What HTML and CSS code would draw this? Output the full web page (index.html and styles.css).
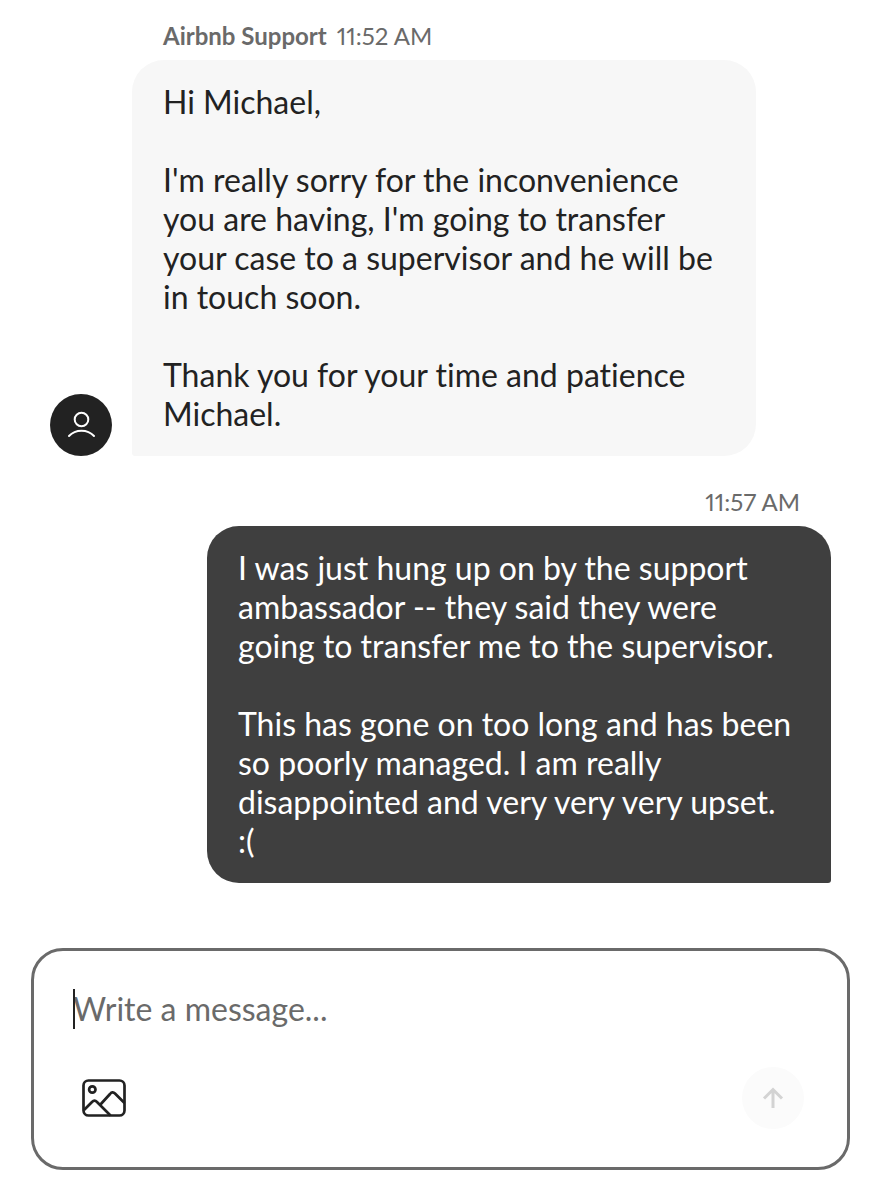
FILE: index.html
```html
<!DOCTYPE html>
<html lang="en">
<head>
  <meta charset="UTF-8" />
  <meta name="viewport" content="width=device-width, initial-scale=1.0" />
  <title>Airbnb Support</title>
  <link rel="stylesheet" href="styles.css">
</head>
<body>
  <main class="chat">
    <article class="message incoming">
      <p class="meta"><strong>Airbnb Support</strong><time>11:52 AM</time></p>
      <div class="message-row">
        <div class="avatar">
          <svg viewBox="0 0 62 62" fill="none" stroke="#fff" stroke-width="2" stroke-linecap="round" aria-hidden="true">
            <circle cx="31.5" cy="25.5" r="6.8" />
            <path d="M19 42C25.5 35 37.5 35 44 42" />
          </svg>
        </div>
        <div class="bubble">
          <p>Hi Michael,</p>
          <p>I'm really sorry for the inconvenience you are having, I'm going to transfer your case to a supervisor and he will be in touch soon.</p>
          <p>Thank you for your time and patience Michael.</p>
        </div>
      </div>
    </article>

    <article class="message outgoing">
      <p class="meta"><time>11:57 AM</time></p>
      <div class="bubble">
        <p>I was just hung up on by the support ambassador -- they said they were going to transfer me to the supervisor.</p>
        <p>This has gone on too long and has been so poorly managed. I am really disappointed and very very very upset. <span class="emoticon">:(</span></p>
      </div>
    </article>
  </main>

  <form class="composer">
    <div class="field">
      <textarea id="message" rows="1" placeholder="Write a message..." aria-label="Write a message"></textarea>
    </div>
    <div class="actions">
      <button type="button" class="image-btn" aria-label="Add image">
        <svg viewBox="0 0 44 38" fill="none" stroke="#222" stroke-width="2.7" aria-hidden="true">
          <rect x="1.5" y="1.5" width="41" height="35" rx="5" />
          <circle cx="10.3" cy="10.5" r="3.2" />
          <path d="M2 31L10 23Q12.5 20.5 15 23L28.5 36.5M18 26L28 15Q30.5 12 33 14.5L42.5 24" />
        </svg>
      </button>
      <button type="submit" class="send-btn" aria-label="Send" disabled>
        <svg viewBox="0 0 62 62" fill="none" stroke="#d3d3d3" stroke-width="3" aria-hidden="true">
          <path d="M31 41V22M22 31.5L31 22.5L40 31.5" />
        </svg>
      </button>
    </div>
  </form>
</body>
</html>
```
FILE: styles.css
```css
* {
  box-sizing: border-box;
  margin: 0;
  padding: 0;
}
body {
  font-family: Lato, "Liberation Sans", sans-serif;
  font-size: 32px;
  line-height: 39px;
  font-variant-ligatures: none;
  font-variant-numeric: proportional-nums;
  color: #222;
  background: #fff;
}
.chat {
  display: flex;
  flex-direction: column;
  gap: 31px;
  padding: 21px 58px 65px 50px;
}
.message {
  display: flex;
  flex-direction: column;
}
.meta {
  display: flex;
  gap: 10px;
  font-size: 24px;
  line-height: 30px;
  padding: 0 31px;
  margin-bottom: 9px;
  color: #6a6a6a;
}
.incoming .meta {
  margin-left: 82px;
}
.message-row {
  display: flex;
  align-items: flex-end;
  gap: 20px;
}
.avatar {
  flex: none;
  width: 62px;
  height: 62px;
  border-radius: 50%;
  background: #222;
}
.avatar svg,
.send-btn svg,
.image-btn svg {
  display: block;
  width: 100%;
}
.bubble {
  display: flex;
  flex-direction: column;
  gap: 39px;
  max-width: 624px;
  padding: 22px 31px 23px;
  border-radius: 32px;
}
.incoming .bubble {
  background: #f7f7f7;
  border-bottom-left-radius: 3px;
}
.outgoing {
  align-items: flex-end;
}
.outgoing .bubble {
  background: #3f3f3f;
  color: #fff;
  border-bottom-right-radius: 3px;
}
.emoticon {
  white-space: nowrap;
}
.composer {
  display: flex;
  flex-direction: column;
  gap: 38px;
  margin: 0 39px 30px 31px;
  padding: 38px 43px 38px 39px;
  border: 3px solid #6a6a6a;
  border-radius: 32px;
}
.field {
  position: relative;
  display: flex;
}
/* text cursor */
.field::before {
  content: "";
  position: absolute;
  left: 0;
  top: 0;
  width: 2px;
  height: 100%;
  background: #222;
}
textarea {
  width: 100%;
  height: 40px;
  border: none;
  outline: none;
  resize: none;
  overflow: hidden;
  background: none;
  font: inherit;
  color: #222;
}
textarea::placeholder {
  color: #6a6a6a;
  opacity: 1;
}
.actions {
  display: flex;
  justify-content: space-between;
  align-items: center;
}
button {
  border: none;
  background: none;
  cursor: pointer;
}
.image-btn {
  width: 44px;
  margin-left: 9px;
}
.send-btn {
  width: 62px;
  height: 62px;
  border-radius: 50%;
  background: #fbfbfb;
}
```
